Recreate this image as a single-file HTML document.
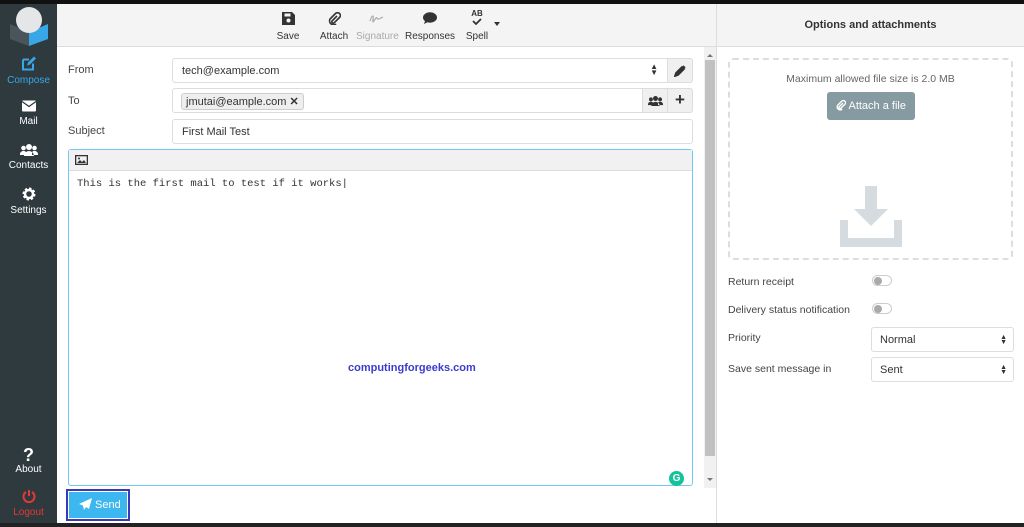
<!DOCTYPE html>
<html><head><style>
*{box-sizing:border-box;margin:0;padding:0}
body{width:1024px;height:527px;overflow:hidden;background:#fff;font-family:"Liberation Sans",sans-serif;font-size:11px;color:#333;position:relative}
.abs{position:absolute}
.side{left:0;top:4px;width:57px;height:519px;background:#2f3a3f}
.nav{position:absolute;left:0;width:57px;text-align:center;color:#fff;font-size:10px}
.nav svg{display:block;margin:0 auto 4px}
.lbl{position:absolute;left:68px;font-size:11px;color:#444}
.inp{position:absolute;left:172px;width:521px;height:25px;border:1px solid #ddd;border-radius:3px;background:#fff;font-size:11px;padding:6px 9px;color:#333}
.tb{position:absolute;top:12px;text-align:center;font-size:10px;color:#333}
.tb svg{display:block;margin:0 auto 6px}
</style></head><body>
<div class="abs" style="left:0;top:0;width:1024px;height:4px;background:#111"></div>
<div class="abs" style="left:0;top:523px;width:1024px;height:4px;background:#222"></div>
<div class="abs side"></div>
<svg class="abs" style="left:8px;top:6px" width="42" height="40" viewBox="0 0 42 40"><path d="M2 18 L21 26 L21 40 L2 33Z" fill="#4a555b"/><path d="M21 26 L40 18 L40 33 L21 40Z" fill="#37a7e8"/><circle cx="21" cy="14" r="13" fill="#e4e6e8"/></svg>
<div class="nav" style="top:56px;color:#37a7e8"><svg width="14" height="15" viewBox="0 0 14 14"><path d="M1 3h6M1 3v10h10V7" stroke="#37a7e8" stroke-width="2" fill="none"/><path d="M5 9l1-3 6-6 2 2-6 6z" fill="#37a7e8"/></svg>Compose</div>
<div class="nav" style="top:100px"><svg width="14" height="12" viewBox="0 0 14 11"><rect width="14" height="11" rx="1" fill="#fff"/><path d="M0 1l7 5 7-5" stroke="#2f3a3f" stroke-width="1.3" fill="none"/></svg>Mail</div>
<div class="nav" style="top:144px"><svg width="18" height="12" viewBox="0 0 18 12"><circle cx="9" cy="3" r="3" fill="#fff"/><circle cx="3.5" cy="4" r="2.3" fill="#fff"/><circle cx="14.5" cy="4" r="2.3" fill="#fff"/><path d="M4 12a5 5 0 0110 0z M0 11a3.5 3.5 0 016 -3v3z M18 11a3.5 3.5 0 00-6-3v3z" fill="#fff"/></svg>Contacts</div>
<div class="nav" style="top:187px"><svg width="14" height="14" viewBox="0 0 14 14"><circle cx="7" cy="7" r="5" fill="none" stroke="#fff" stroke-width="3" stroke-dasharray="2.2 1.7"/><circle cx="7" cy="7" r="4" fill="none" stroke="#fff" stroke-width="2.5"/></svg>Settings</div>
<div class="nav" style="top:446px"><div style="font-size:18px;font-weight:bold;line-height:18px">?</div>About</div>
<div class="nav" style="top:489px;color:#e53935"><svg width="14" height="14" viewBox="0 0 14 14"><path d="M4 3a5.5 5.5 0 106 0" stroke="#e53935" stroke-width="2" fill="none"/><path d="M7 1v6" stroke="#e53935" stroke-width="2"/></svg>Logout</div>

<div class="abs" style="left:57px;top:4px;width:660px;height:43px;background:#f4f4f4;border-bottom:1px solid #ddd"></div>
<div class="tb" style="left:275px;width:26px"><svg width="13" height="13" viewBox="0 0 13 13"><path d="M0 0h10l3 3v10H0z" fill="#333"/><rect x="2.5" y="1.5" width="6" height="3" fill="#f4f4f4"/><circle cx="6.5" cy="8.5" r="2" fill="#f4f4f4"/></svg>Save</div>
<div class="tb" style="left:318px;width:32px"><svg width="13" height="13" viewBox="0 0 13 13"><path d="M9 4L4 9a1.5 1.5 0 002 2l5.5-5.5a2.8 2.8 0 00-4-4L2 7a4 4 0 006 5" stroke="#333" stroke-width="1.6" fill="none"/></svg>Attach</div>
<div class="tb" style="left:356px;width:42px;color:#aaa"><svg width="16" height="13" viewBox="0 0 16 13"><path d="M1 9c2-6 4-7 3-1s3-4 4-2 2 1 6-1" stroke="#aaa" stroke-width="1.2" fill="none"/></svg>Signature</div>
<div class="tb" style="left:405px;width:50px"><svg width="14" height="13" viewBox="0 0 14 13"><ellipse cx="7" cy="5.5" rx="7" ry="5.2" fill="#333"/><path d="M2 9l-1 3 4-2z" fill="#333"/></svg>Responses</div>
<div class="tb" style="left:464px;width:26px;top:10px"><div style="font-size:8px;font-weight:bold;line-height:8px">AB</div><svg width="12" height="7" viewBox="0 0 12 7" style="margin-bottom:6px"><path d="M2 3l3 3 5-5" stroke="#333" stroke-width="1.8" fill="none"/></svg>Spell</div>
<div class="abs" style="left:494px;top:22px;border:3px solid transparent;border-top:4px solid #333"></div>

<div class="lbl" style="top:64px">From</div>
<div class="lbl" style="top:95px">To</div>
<div class="lbl" style="top:125px">Subject</div>
<div class="inp" style="top:58px">tech@example.com<span style="position:absolute;right:34px;top:5px;font-size:8px;line-height:6px">▲<br>▼</span></div>
<div class="abs" style="left:667px;top:58px;width:26px;height:25px;background:#f0f0f0;border:1px solid #ddd;border-radius:0 3px 3px 0"><svg style="margin:6px 6px" width="12" height="12" viewBox="0 0 12 12"><path d="M1 11l1-3 6-6 2 2-6 6z M9 1l2 2" stroke="#333" stroke-width="1.8" fill="#333"/></svg></div>
<div class="inp" style="top:88px;padding:4px 8px"><span style="display:inline-block;background:#eee;border:1px solid #ccc;border-radius:3px;padding:1px 4px">jmutai@eample.com <b>✕</b></span></div>
<div class="abs" style="left:642px;top:88px;width:26px;height:25px;background:#f0f0f0;border:1px solid #ddd"><svg style="margin:7px 5px" width="15" height="10" viewBox="0 0 18 12"><circle cx="9" cy="3" r="3" fill="#333"/><circle cx="3.5" cy="4" r="2.3" fill="#333"/><circle cx="14.5" cy="4" r="2.3" fill="#333"/><path d="M4 12a5 5 0 0110 0z M0 11a3.5 3.5 0 016 -3v3z M18 11a3.5 3.5 0 00-6-3v3z" fill="#333"/></svg></div>
<div class="abs" style="left:667px;top:88px;width:26px;height:25px;background:#f0f0f0;border:1px solid #ddd;border-radius:0 3px 3px 0;text-align:center;font-size:17px;line-height:22px;font-weight:bold">+</div>
<div class="inp" style="top:119px">First Mail Test</div>
<div class="abs" style="left:68px;top:149px;width:625px;height:337px;border:1px solid #71c8f3;border-radius:3px"></div>
<div class="abs" style="left:69px;top:150px;width:623px;height:21px;background:#f1f1f1;border-bottom:1px solid #ddd"><svg style="margin:5px 6px" width="13" height="10" viewBox="0 0 13 10"><rect width="13" height="10" fill="#333"/><rect x="1.3" y="1.3" width="10.4" height="7.4" fill="#f1f1f1"/><path d="M2 8l3-3 2 2 2-2 2 3z" fill="#333"/><circle cx="4" cy="3.5" r="1" fill="#333"/></svg></div>
<div class="abs" style="left:77px;top:178px;font-family:'Liberation Mono',monospace;font-size:10.5px;color:#333">This is the first mail to test if it works|</div>
<div class="abs" style="left:348px;top:362px;color:#3b3bd0;font-size:11px;font-weight:bold">computingforgeeks.com</div>
<div class="abs" style="left:669px;top:471px;width:15px;height:15px;border-radius:50%;background:#15c39a;color:#fff;font-size:10px;text-align:center;line-height:15px;font-weight:bold">G</div>
<div class="abs" style="left:704px;top:47px;width:12px;height:441px;background:#f1f1f1"></div>
<div class="abs" style="left:705px;top:60px;width:10px;height:396px;background:#c1c1c1"></div>
<div class="abs" style="left:707px;top:51px;border:3px solid transparent;border-bottom:3px solid #777"></div>
<div class="abs" style="left:707px;top:478px;border:3px solid transparent;border-top:3px solid #777"></div>
<div class="abs" style="left:66px;top:489px;width:64px;height:32px;border:2px solid #3a3ab8;padding:1px"><div style="background:#3db7f0;height:100%;color:#fff;font-size:11px;line-height:26px;padding-left:10px"><svg width="13" height="12" viewBox="0 0 13 12" style="vertical-align:-2px;margin-right:3px"><path d="M13 0L0 6l4 1.5L5 12l2-3 3 2z" fill="#fff"/></svg>Send</div></div>

<div class="abs" style="left:716px;top:4px;width:1px;height:519px;background:#ddd"></div>
<div class="abs" style="left:717px;top:4px;width:307px;height:43px;background:#f4f4f4;border-bottom:1px solid #ddd;text-align:center;font-weight:bold;font-size:11px;line-height:43px;color:#333">Options and attachments</div>
<div class="abs" style="left:728px;top:58px;width:285px;height:202px;border:2px dashed #ddd;border-radius:5px"></div>
<div class="abs" style="left:728px;top:73px;width:285px;text-align:center;color:#666;font-size:10.5px">Maximum allowed file size is 2.0 MB</div>
<div class="abs" style="left:827px;top:92px;width:88px;height:28px;background:#869aa1;border-radius:3px;color:#fff;font-size:11px;line-height:28px;text-align:center"><svg width="10" height="12" viewBox="0 0 13 13" style="vertical-align:-2px"><path d="M9 4L4 9a1.5 1.5 0 002 2l5.5-5.5a2.8 2.8 0 00-4-4L2 7a4 4 0 006 5" stroke="#fff" stroke-width="1.8" fill="none"/></svg> Attach a file</div>
<svg class="abs" style="left:840px;top:186px" width="62" height="61" viewBox="0 0 62 61"><path d="M25 0h12v23h11L31 40 14 23h11z" fill="#d5dbde"/><path d="M0 34h8v18h46V34h8v27H0z" fill="#d5dbde"/></svg>
<div class="abs" style="left:728px;top:276px;font-size:10.5px;color:#444">Return receipt</div>
<div class="abs" style="left:728px;top:304px;font-size:10.5px;color:#444">Delivery status notification</div>
<div class="abs" style="left:872px;top:275px;width:20px;height:11px;border:1px solid #ccc;border-radius:6px"><div style="width:8px;height:8px;margin:1px;border-radius:50%;background:#aaa"></div></div>
<div class="abs" style="left:872px;top:303px;width:20px;height:11px;border:1px solid #ccc;border-radius:6px"><div style="width:8px;height:8px;margin:1px;border-radius:50%;background:#aaa"></div></div>
<div class="abs" style="left:728px;top:332px;font-size:10.5px;color:#444">Priority</div>
<div class="abs" style="left:728px;top:363px;font-size:10.5px;color:#444">Save sent message in</div>
<div class="abs" style="left:871px;top:327px;width:143px;height:25px;border:1px solid #ddd;border-radius:3px;padding:6px 8px;font-size:11px">Normal<span style="position:absolute;right:6px;top:7px;font-size:7px;line-height:5px">▲<br>▼</span></div>
<div class="abs" style="left:871px;top:357px;width:143px;height:25px;border:1px solid #ddd;border-radius:3px;padding:6px 8px;font-size:11px">Sent<span style="position:absolute;right:6px;top:7px;font-size:7px;line-height:5px">▲<br>▼</span></div>
</body></html>
